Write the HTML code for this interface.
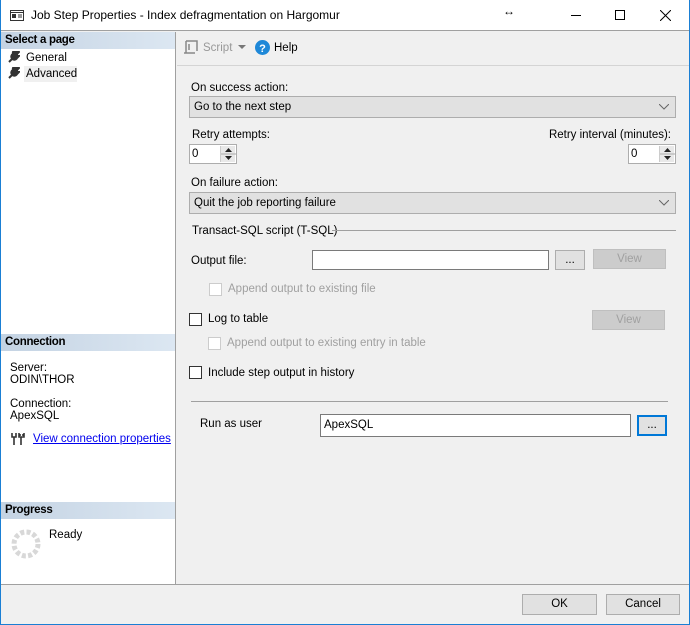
<!DOCTYPE html>
<html><head><style>
*{margin:0;padding:0;box-sizing:border-box}
body{width:690px;height:625px;position:relative;overflow:hidden;font-family:"Liberation Sans",sans-serif;font-size:11.5px;color:#000;background:#f0f0f0}
.a{position:absolute}
.t{position:absolute;white-space:nowrap;line-height:14px}
.hdr{position:absolute;left:1px;width:174px;height:17px;background:linear-gradient(to right,#c4d3e3,#dce7f2);font-weight:bold;padding-left:4px;line-height:17px;letter-spacing:-0.3px}
.combo{position:absolute;background:#e1e1e1;border:1px solid #adadad;height:22px;line-height:20px;padding-left:4px}
.combo svg{position:absolute;right:6px;top:7px}
.tb{position:absolute;background:#fff;border:1px solid #7a7a7a}
.btn{position:absolute;background:#e1e1e1;border:1px solid #adadad;text-align:center;line-height:18px}
.dis{background:#cccccc;border-color:#bfbfbf;color:#a0a0a0}
.cb{position:absolute;width:13px;height:13px;border:1px solid #333;background:#fff}
.cbd{border-color:#cccccc}
.g{color:#a0a0a0}
</style></head><body>
<div class="a" style="left:0;top:0;width:690px;height:625px;border:1px solid #1a7fd4;border-top:none"></div>
<div class="a" style="left:1px;top:0;width:688px;height:31px;background:#fff;border-bottom:1px solid #a0a0a0"></div>
<svg class="a" style="left:10px;top:10px" width="14" height="12"><rect x="0.5" y="0.5" width="13" height="10" fill="none" stroke="#333"/><line x1="0" y1="2.5" x2="14" y2="2.5" stroke="#333"/><rect x="2" y="4" width="4" height="4" fill="#333"/><line x1="8" y1="5" x2="12" y2="5" stroke="#333"/><line x1="8" y1="7" x2="12" y2="7" stroke="#333"/></svg>
<div class="t" style="left:31px;top:8px;font-size:12px">Job Step Properties - Index defragmentation on Hargomur</div>
<div class="t" style="left:503px;top:4px;font-size:12px;font-weight:bold">↔</div>
<div class="a" style="left:571px;top:15px;width:10px;height:1px;background:#000"></div>
<div class="a" style="left:615px;top:10px;width:10px;height:10px;border:1px solid #000"></div>
<svg class="a" style="left:660px;top:10px" width="11" height="11"><path d="M0 0L11 11M11 0L0 11" stroke="#000" stroke-width="1"/></svg>
<div class="a" style="left:1px;top:32px;width:175px;height:552px;background:#fff;border-right:1px solid #a0a0a0"></div>
<div class="hdr" style="top:32px">Select a page</div>
<svg class="a" style="left:8px;top:51px" width="12" height="12"><path d="M1 11L6 6M5 3a3 3 0 1 0 4 4l2-2-2 0 0-2 2-2a3 3 0 0 0-6 2z" stroke="#333" stroke-width="2" fill="#333"/></svg>
<div class="t" style="left:26px;top:51px">General</div>
<div class="a" style="left:24px;top:66px;width:53px;height:16px;background:#f0f0f0"></div>
<svg class="a" style="left:8px;top:67px" width="12" height="12"><path d="M1 11L6 6M5 3a3 3 0 1 0 4 4l2-2-2 0 0-2 2-2a3 3 0 0 0-6 2z" stroke="#333" stroke-width="2" fill="#333"/></svg>
<div class="t" style="left:26px;top:67px">Advanced</div>
<div class="hdr" style="top:334px">Connection</div>
<div class="t" style="left:10px;top:361px">Server:</div>
<div class="t" style="left:10px;top:373px">ODIN\THOR</div>
<div class="t" style="left:10px;top:397px">Connection:</div>
<div class="t" style="left:10px;top:409px">ApexSQL</div>
<svg class="a" style="left:11px;top:433px" width="14" height="12"><path d="M1 0v4h4V0M3 4v8M8 0v4h5V0M10 4v8M9 1v2M12 1v2" stroke="#333" stroke-width="1.6" fill="none"/></svg>
<div class="t" style="left:33px;top:432px;color:#0000ee;text-decoration:underline">View connection properties</div>
<div class="hdr" style="top:502px">Progress</div>
<svg class="a" style="left:10px;top:528px" width="32" height="32"><circle cx="16" cy="16" r="12" fill="none" stroke="#d8d8d8" stroke-width="5" stroke-dasharray="4 2.3"/></svg>
<div class="t" style="left:49px;top:528px">Ready</div>
<div class="a" style="left:177px;top:65px;width:512px;height:1px;background:#d4d4d4"></div>
<svg class="a" style="left:183px;top:40px" width="16" height="15"><path d="M3 1h11v10M3 1v12h9M1 13h4M6 4v6" stroke="#888" stroke-width="1.5" fill="none"/></svg>
<div class="t" style="left:203px;top:41px;color:#999">Script</div>
<svg class="a" style="left:238px;top:45px" width="8" height="5"><path d="M0 0h8L4 4z" fill="#777"/></svg>
<svg class="a" style="left:255px;top:40px" width="15" height="15"><circle cx="7.5" cy="7.5" r="7.5" fill="#1e88d8"/><text x="7.5" y="12" font-size="11" font-weight="bold" fill="#fff" text-anchor="middle" font-family="Liberation Sans">?</text></svg>
<div class="t" style="left:274px;top:41px">Help</div>
<div class="t" style="left:191px;top:81px">On success action:</div>
<div class="combo" style="left:189px;top:96px;width:487px">Go to the next step<svg width="10" height="6"><path d="M0 0L5 5L10 0" stroke="#666" fill="none"/></svg></div>
<div class="t" style="left:192px;top:128px">Retry attempts:</div>
<div class="t" style="right:19px;top:128px">Retry interval (minutes):</div>
<div class="tb" style="left:189px;top:144px;width:48px;height:20px;border-color:#adadad;padding-left:2px;line-height:18px">0</div>
<div class="a" style="left:220px;top:146px;width:15px;height:16px;background:#e8e8e8;border-left:1px solid #ccc"><svg width="15" height="16"><path d="M4 6h7L7.5 2z M4 10h7L7.5 14z" fill="#222"/><line x1="0" y1="8" x2="15" y2="8" stroke="#aaa"/></svg></div>
<div class="tb" style="left:628px;top:144px;width:48px;height:20px;border-color:#adadad;padding-left:2px;line-height:18px">0</div>
<div class="a" style="left:659px;top:146px;width:15px;height:16px;background:#e8e8e8;border-left:1px solid #ccc"><svg width="15" height="16"><path d="M4 6h7L7.5 2z M4 10h7L7.5 14z" fill="#222"/><line x1="0" y1="8" x2="15" y2="8" stroke="#aaa"/></svg></div>
<div class="t" style="left:191px;top:176px">On failure action:</div>
<div class="combo" style="left:189px;top:192px;width:487px">Quit the job reporting failure<svg width="10" height="6"><path d="M0 0L5 5L10 0" stroke="#666" fill="none"/></svg></div>
<div class="t" style="left:192px;top:224px">Transact-SQL script (T-SQL)</div>
<div class="a" style="left:332px;top:230px;width:344px;height:1px;background:#a0a0a0"></div>
<div class="t" style="left:191px;top:254px">Output file:</div>
<div class="tb" style="left:312px;top:250px;width:237px;height:20px"></div>
<div class="btn" style="left:555px;top:250px;width:30px;height:20px">...</div>
<div class="btn dis" style="left:593px;top:249px;width:73px;height:20px">View</div>
<div class="cb cbd" style="left:209px;top:283px"></div>
<div class="t g" style="left:228px;top:282px">Append output to existing file</div>
<div class="cb" style="left:189px;top:313px"></div>
<div class="t" style="left:208px;top:312px">Log to table</div>
<div class="btn dis" style="left:592px;top:310px;width:73px;height:20px">View</div>
<div class="cb cbd" style="left:208px;top:337px"></div>
<div class="t g" style="left:227px;top:336px">Append output to existing entry in table</div>
<div class="cb" style="left:189px;top:366px"></div>
<div class="t" style="left:208px;top:366px">Include step output in history</div>
<div class="a" style="left:191px;top:401px;width:477px;height:1px;background:#a0a0a0"></div>
<div class="t" style="left:200px;top:417px">Run as user</div>
<div class="tb" style="left:320px;top:414px;width:311px;height:23px;padding-left:3px;line-height:20px">ApexSQL</div>
<div class="btn" style="left:637px;top:415px;width:30px;height:21px;border:2px solid #0078d7;line-height:17px">...</div>
<div class="a" style="left:1px;top:584px;width:688px;height:1px;background:#a0a0a0"></div>
<div class="btn" style="left:522px;top:594px;width:75px;height:21px">OK</div>
<div class="btn" style="left:606px;top:594px;width:74px;height:21px">Cancel</div>
</body></html>
